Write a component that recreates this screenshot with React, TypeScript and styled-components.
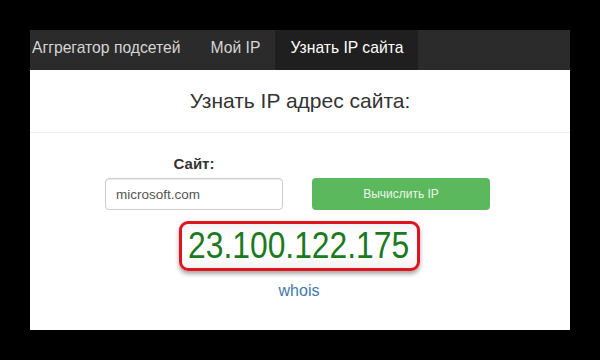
import styled, { createGlobalStyle } from 'styled-components';

const GlobalStyle = createGlobalStyle`
  html, body {
    margin: 0;
    padding: 0;
    background: #000;
  }
  body {
    font-family: 'Liberation Sans', Arial, sans-serif;
  }
`;

const tabs = ['Аггрегатор подсетей', 'Мой IP', 'Узнать IP сайта'];

const App = () => {
  return (
    <StyledPage>
      <GlobalStyle />
      <StyledPanel>
        <StyledNav>
          {tabs.map((tab, i) => (
            <StyledNavItem key={tab} $active={i === 2} $first={i === 0}>
              {tab}
            </StyledNavItem>
          ))}
        </StyledNav>
        <StyledHeader>
          <StyledTitle>Узнать IP адрес сайта:</StyledTitle>
        </StyledHeader>
        <StyledForm>
          <StyledLabel>Сайт:</StyledLabel>
          <span />
          <StyledInput defaultValue="microsoft.com" readOnly />
          <StyledButton>Вычислить IP</StyledButton>
        </StyledForm>
        <StyledResult>
          <StyledIpBox>
            <StyledIp>23.100.122.175</StyledIp>
          </StyledIpBox>
          <StyledLink href="#">whois</StyledLink>
        </StyledResult>
      </StyledPanel>
    </StyledPage>
  );
};

const StyledPage = styled.div`
  padding: 30px;
  width: 540px;
  height: 300px;
`;

const StyledPanel = styled.div`
  display: flex;
  flex-direction: column;
  width: 540px;
  height: 300px;
  background: #fff;
`;

const StyledNav = styled.nav`
  display: flex;
  height: 40px;
  background: #2b2b2b;
`;

const StyledNavItem = styled.a<{ $active?: boolean; $first?: boolean }>`
  padding: 0 15px 0 ${({ $first }) => ($first ? '2px' : '15px')};
  line-height: 36px;
  font-size: 15.7px;
  color: ${({ $active }) => ($active ? '#fff' : '#d6d6d6')};
  background: ${({ $active }) => ($active ? '#1f1f1f' : 'transparent')};
`;

const StyledHeader = styled.header`
  display: flex;
  align-items: center;
  justify-content: center;
  height: 62px;
  border-bottom: 1px solid #eee;
`;

const StyledTitle = styled.h1`
  margin: 0;
  font-size: 21px;
  font-weight: 400;
  color: #333;
`;

const StyledForm = styled.div`
  display: grid;
  grid-template-columns: 178px 178px;
  column-gap: 29px;
  row-gap: 5px;
  justify-content: center;
  padding-right: 5px;
  margin-top: 22px;
`;

const StyledLabel = styled.label`
  font-size: 15px;
  line-height: 18px;
  font-weight: 700;
  text-align: center;
  color: #333;
`;

const StyledInput = styled.input`
  box-sizing: border-box;
  height: 32px;
  padding: 0 10px;
  border: 1px solid #ccc;
  border-radius: 4px;
  font-family: 'Liberation Sans', Arial, sans-serif;
  font-size: 13.5px;
  color: #555;
  box-shadow: inset 0 1px 1px rgba(0, 0, 0, 0.075);
  outline: none;
`;

const StyledButton = styled.button`
  height: 32px;
  border: none;
  border-radius: 4px;
  background: #5cb85c;
  font-family: 'Liberation Sans', Arial, sans-serif;
  font-size: 12px;
  color: #eaf6ea;
`;

const StyledResult = styled.div`
  display: flex;
  flex-direction: column;
  align-items: center;
  margin-top: 11px;
  padding-right: 2px;
`;

const StyledIpBox = styled.div`
  box-sizing: border-box;
  display: flex;
  align-items: center;
  justify-content: center;
  width: 241px;
  height: 50px;
  border: 3px solid #e0141e;
  border-radius: 9px;
  background: linear-gradient(#f4f4f4, #fff 30%, #fff 70%, #f2f2f2);
  box-shadow: 0 3px 4px rgba(0, 0, 0, 0.35);
`;

const StyledIp = styled.span`
  display: inline-block;
  font-size: 37px;
  line-height: 40px;
  color: #1b7a1e;
  transform: scaleX(0.86);
  white-space: nowrap;
`;

const StyledLink = styled.a`
  margin-top: 10px;
  font-size: 16px;
  line-height: 20px;
  color: #3f79ad;
  text-decoration: none;
`;

export default App;
